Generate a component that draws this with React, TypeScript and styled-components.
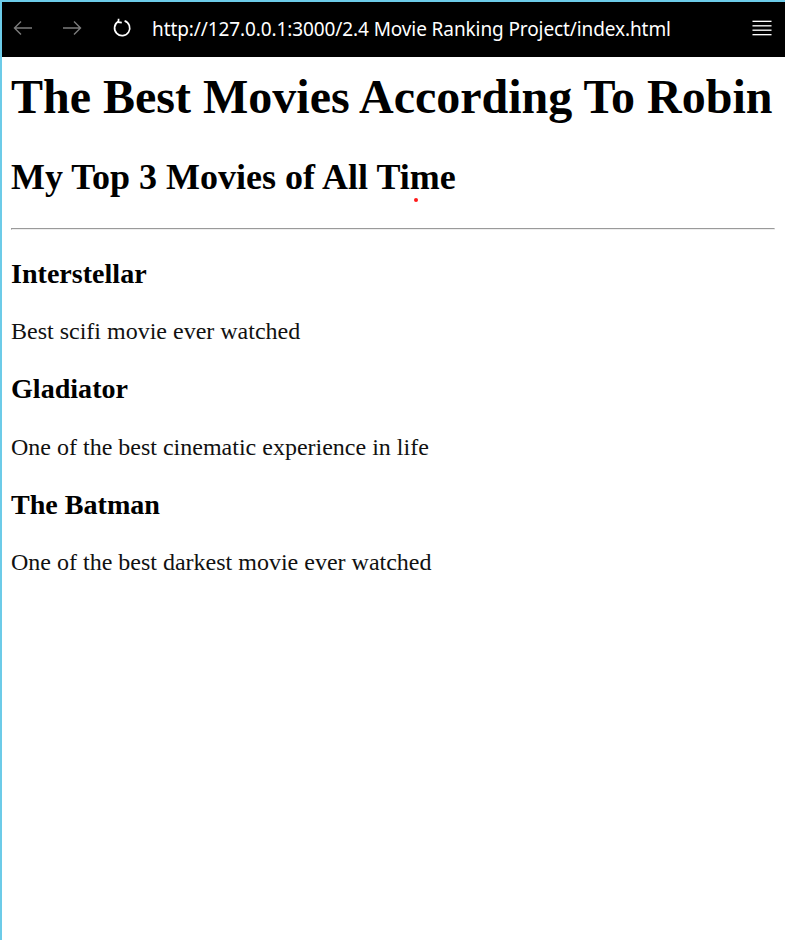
import React from "react";
import styled, { createGlobalStyle } from "styled-components";

const GlobalStyle = createGlobalStyle`
  html, body { margin: 0; padding: 0; background: #ffffff; }
  * { box-sizing: border-box; }
`;

const Frame = styled.div`
  position: relative;
  width: 785px;
  height: 940px;
  border-top: 2px solid #6ccbe8;
  border-left: 2px solid #6ccbe8;
  background: #ffffff;
  overflow: hidden;
`;

const Toolbar = styled.div`
  height: 55px;
  background: #000000;
  display: flex;
  align-items: center;
  padding: 0 13px 0 11px;
`;

const NavButton = styled.div<{ $gap: number }>`
  width: 20px;
  height: 20px;
  display: flex;
  align-items: center;
  justify-content: center;
  margin-right: ${(p) => p.$gap}px;
  margin-top: -3px;
`;

const Url = styled.div`
  flex: 1;
  color: #ffffff;
  font-family: "Noto Sans", "Open Sans", sans-serif;
  font-size: 19px;
  letter-spacing: -0.1px;
  white-space: nowrap;
  margin-top: -2px;
`;

const Page = styled.main`
  padding: 12px 10px 0 9px;
  font-family: "Liberation Serif", "Times New Roman", serif;
  color: #000000;
`;

const Title = styled.h1`
  font-size: 48px;
  font-weight: bold;
  margin: 0 0 32px;
  white-space: nowrap;
`;

const Subtitle = styled.h2`
  position: relative;
  font-size: 36px;
  font-weight: bold;
  margin: 0 0 30px;
`;

const Cursor = styled.span`
  position: absolute;
  left: 403px;
  top: 42px;
  width: 4px;
  height: 4px;
  border-radius: 50%;
  background: #ff1a1a;
`;

const Rule = styled.hr`
  margin: 0 0 28px;
  height: 2px;
  border-style: solid;
  border-width: 1px;
  border-color: #9a9a9a #eeeeee #eeeeee #9a9a9a;
`;

const MovieTitle = styled.h3`
  font-size: 28.08px;
  font-weight: bold;
  margin: 0 0 28.2px;
`;

const MovieNote = styled.p`
  font-size: 24px;
  margin: 0 0 28.2px;
  color: #111111;
`;

const movies = [
  { title: "Interstellar", note: "Best scifi movie ever watched" },
  { title: "Gladiator", note: "One of the best cinematic experience in life" },
  { title: "The Batman", note: "One of the best darkest movie ever watched" },
];

const Arrow = ({ dir, color }: { dir: "left" | "right"; color: string }) => (
  <svg width="20" height="16" viewBox="0 0 20 16" fill="none">
    {dir === "left" ? (
      <path d="M19 8H1.5M8 1.5L1.5 8L8 14.5" stroke={color} strokeWidth="1.4" />
    ) : (
      <path d="M1 8h17.5M12 1.5L18.5 8L12 14.5" stroke={color} strokeWidth="1.4" />
    )}
  </svg>
);

const Reload = () => (
  <svg width="20" height="20" viewBox="0 0 20 20" fill="none">
    <path
      d="M6.2 3.6 A7.6 7.6 0 1 0 12.6 2.9"
      stroke="#ffffff"
      strokeWidth="1.7"
      fill="none"
    />
    <path d="M6.6 0.8 L6.4 4.2 L9.8 4.6" stroke="#ffffff" strokeWidth="1.7" fill="none" />
  </svg>
);

const Menu = () => (
  <svg width="21" height="18" viewBox="0 0 21 18" fill="none">
    {[2, 6.7, 11.3, 16].map((y) => (
      <path key={y} d={`M0.5 ${y}H20.5`} stroke="#ffffff" strokeWidth="1.4" />
    ))}
  </svg>
);

export default function App() {
  return (
    <>
      <GlobalStyle />
      <Frame>
        <Toolbar>
          <NavButton $gap={29}>
            <Arrow dir="left" color="#7c7c7c" />
          </NavButton>
          <NavButton $gap={30}>
            <Arrow dir="right" color="#7c7c7c" />
          </NavButton>
          <NavButton $gap={20}>
            <Reload />
          </NavButton>
          <Url>http://127.0.0.1:3000/2.4 Movie Ranking Project/index.html</Url>
          <NavButton $gap={0}>
            <Menu />
          </NavButton>
        </Toolbar>
        <Page>
          <Title>The Best Movies According To Robin</Title>
          <Subtitle>
            My Top 3 Movies of All Time
            <Cursor />
          </Subtitle>
          <Rule />
          {movies.map((m) => (
            <React.Fragment key={m.title}>
              <MovieTitle>{m.title}</MovieTitle>
              <MovieNote>{m.note}</MovieNote>
            </React.Fragment>
          ))}
        </Page>
      </Frame>
    </>
  );
}
